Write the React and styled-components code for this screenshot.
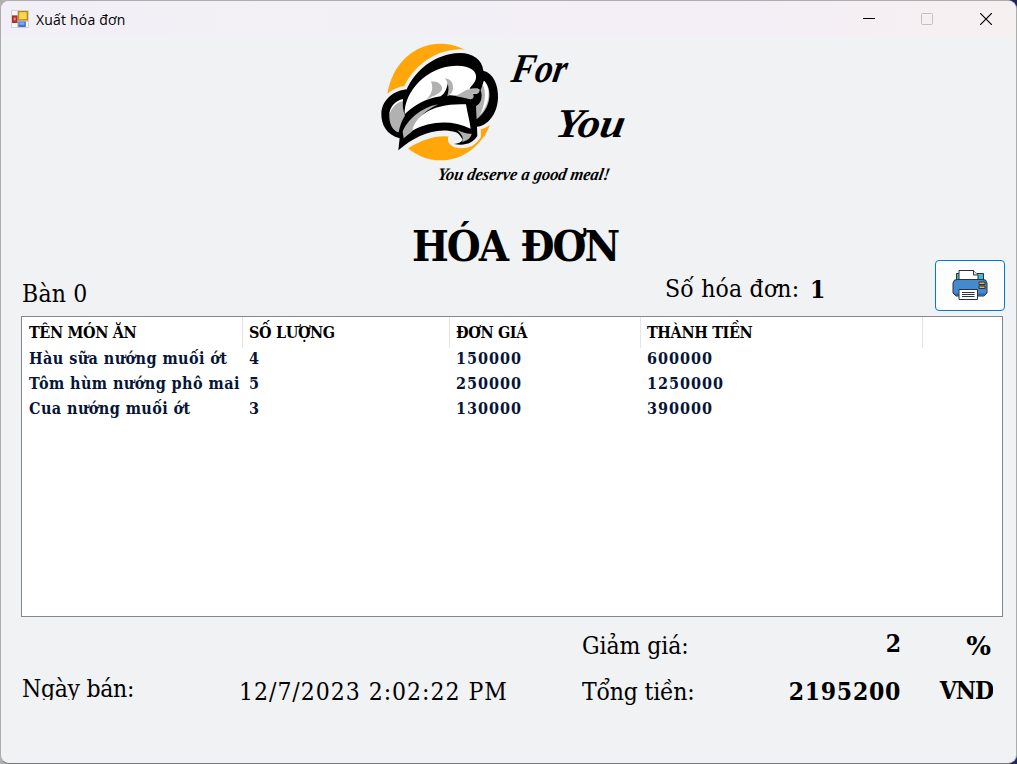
import React from 'react';
import styled, { createGlobalStyle } from 'styled-components';

const Global = createGlobalStyle`
  * { box-sizing: border-box; }
  body {
    margin: 0;
    background: linear-gradient(90deg, #b0b0b0 0 109px, #666 109px 617px, #8a8a8a 617px 677px, #1e2460 677px);
  }
`;

const Window = styled.div`
  width: 1017px;
  height: 764px;
  display: flex;
  flex-direction: column;
  overflow: hidden;
  background: #f0f2f4;
  border: 1px solid #acacac;
  border-bottom-color: #77787c;
  border-radius: 9px;
  color: #000;
  font-family: "DejaVu Serif Condensed", "DejaVu Serif", serif;
`;

const TitleBar = styled.header`
  flex: none;
  height: 36px;
  display: flex;
  align-items: center;
  padding-left: 10px;
  background: linear-gradient(90deg, #f2f0f6, #f4eff6 75%, #f7f0f1);
`;

const Caption = styled.span`
  flex: 1;
  margin-left: 7px;
  padding-top: 2px;
  font: 14px/20px "Open Sans", sans-serif;
  letter-spacing: 0.2px;
`;

const CaptionButtons = styled.div`
  display: flex;
  margin-right: 1px;
`;

const CaptionButton = styled.button`
  width: 58.5px;
  height: 36px;
  padding: 0;
  border: 0;
  background: none;
  display: grid;
  place-items: center;
  color: ${(p) => (p.disabled ? '#c3bfc2' : '#000')};
`;

const Brand = styled.div`
  flex: none;
  height: 185px;
  padding: 3px 0 0 375px;
`;

const Heading = styled.h1`
  flex: none;
  height: 38px;
  margin: 0;
  padding-left: 411px;
  font-size: 43.3px;
  line-height: 47px;
  font-weight: 700;
  letter-spacing: -2px;
  word-spacing: 2px;
  white-space: nowrap;
`;

const InfoRow = styled.div`
  flex: none;
  height: 56px;
  display: grid;
  grid-template-columns: 643px 145px 125px 70px;
  align-items: start;
  padding-left: 21px;
`;

const Label = styled.span`
  display: block;
  height: ${(p) => p.$height || 40}px;
  margin-top: ${(p) => p.$top || 0}px;
  overflow: hidden;
  font-size: 24.5px;
  line-height: 40px;
  letter-spacing: ${(p) => p.$spacing || 0}px;
  white-space: nowrap;
`;

const Value = styled(Label)`
  font-weight: 700;
  text-align: ${(p) => p.$align || 'left'};
`;

const Percent = styled(Value)`
  padding-right: 2px;
  font-family: "DejaVu Serif", serif;
  font-size: 26px;
`;

const PrintButton = styled.button`
  width: 70px;
  height: 51px;
  padding: 0 0 1px 0;
  display: grid;
  place-items: center;
  background: #fdfdfd;
  border: 1px solid #0078d4;
  border-radius: 4px;
`;

const ListView = styled.div`
  flex: none;
  width: 982px;
  height: 301px;
  margin-left: 20px;
  background: #fff;
  border: 1px solid #828790;
`;

const ListRow = styled.div`
  display: grid;
  grid-template-columns: 221px 207px 191px 282px 1fr;
  height: 25px;
  color: #061536;
  font-size: 16px;
  line-height: 25px;
  font-weight: 700;
`;

const ListHead = styled(ListRow)`
  height: 28px;
  margin-bottom: 1px;
  color: #000;
  font-size: 16px;
  line-height: 31px;
`;

const Cell = styled.span`
  padding-left: ${(p) => (p.$numeric ? 6 : 7)}px;
  white-space: nowrap;
  letter-spacing: ${(p) => (p.$numeric ? 1 : 0.43)}px;
`;

const HeadCell = styled(Cell)`
  border-right: 1px solid #e5e5e5;
  letter-spacing: -0.35px;
`;

const Summary = styled.footer`
  flex: 1;
  display: grid;
  grid-template-columns: 217px 343px 169px 150px 92px;
  grid-template-rows: 46px 46px;
  align-items: start;
  padding: 9px 0 0 21px;
`;

const columns = ['TÊN MÓN ĂN', 'SỐ LƯỢNG', 'ĐƠN GIÁ', 'THÀNH TIỀN'];
const dishes = [
  ['Hàu sữa nướng muối ớt', '4', '150000', '600000'],
  ['Tôm hùm nướng phô mai', '5', '250000', '1250000'],
  ['Cua nướng muối ớt', '3', '130000', '390000'],
];

const FormIcon = () => (
  <svg width="18" height="18" viewBox="0 0 18 18">
    <rect width="18" height="18" rx="1" fill="#cfd0d4" />
    <path d="M1 1h5v4H1zM1 13h5v4H1zM15 12h2v5h-2z" fill="#f8f8fb" />
    <rect x="1" y="5.5" width="5.5" height="7.5" fill="#b22d2a" />
    <rect x="2.7" y="7.5" width="2" height="3" fill="#e58b80" />
    <rect x="7" y="1" width="10" height="9.5" fill="#b58a14" />
    <rect x="8.2" y="2.2" width="7.5" height="7" fill="#ffd54a" />
    <rect x="7.3" y="11.5" width="7.5" height="5.5" fill="#3f74d8" />
    <rect x="8.3" y="12.3" width="5" height="2.5" fill="#7fa9f2" />
  </svg>
);

const BrandLogo = () => (
  <svg width="260" height="155" viewBox="376 40 260 155">
    <g transform="translate(370 35) scale(.3333)">
      <ellipse cx="212" cy="201" rx="161" ry="175" fill="#ffa60a" />
      <path
        d="M85 346L89 310C50 300 33 270 34 235C36 198 66 168 110 163C135 108 192 56 270 54C308 54 337 74 340 107C370 114 386 150 384 190C382 238 352 274 321 275L322 303C308 325 285 333 256 326C240 318 240 305 262 298C200 280 135 310 85 346Z"
        fill="#f0f2f4" stroke="#f0f2f4" strokeWidth="22" strokeLinejoin="round"
      />
      <path
        d="M85 346L89 310C50 300 33 270 34 235C36 198 66 168 110 163C135 108 192 56 270 54C308 54 337 74 340 107C370 114 386 150 384 190C382 238 352 274 321 275L322 303C308 325 285 333 252 327C264 325 274 322 278 314C272 306 270 298 258 292C200 274 135 302 85 346Z"
        fill="#000"
      />
      <path d="M99 194C70 200 56 222 58 248C60 275 74 290 86 292C90 270 97 254 105 242C98 225 98 208 99 194Z" fill="#b1b1b1" />
      <path d="M99 192C76 197 61 213 58 238C68 214 80 203 98 199Z" fill="#fff" />
      <path d="M104 238C102 170 170 94 258 92C300 91 322 108 318 130C315 146 302 154 299 161C310 162 322 158 328 163C331 174 318 180 308 176C312 186 310 190 302 193C280 183 252 182 233 181C240 170 238 155 234 142C231 160 226 175 212 184C166 191 132 211 104 238Z" fill="#fff" />
      <path d="M183 139C204 139 218 149 216 163C212 178 184 184 166 196C184 180 192 164 183 139ZM225 130C242 132 250 144 249 158C249 172 241 178 232 184C237 166 238 148 225 130ZM256 183C275 176 285 162 306 162C317 163 327 158 328 166C328 176 315 180 308 174C314 186 309 191 302 193Z" fill="#b1b1b1" />
      <path d="M342 137C368 160 366 222 316 255L309 214C330 211 337 190 332 166Z" fill="#b1b1b1" />
      <path d="M342 137C356 150 361 180 350 207C345 220 338 231 330 239C345 212 350 168 338 149Z" fill="#fff" />
      <path d="M98 290C112 256 152 217 205 208C155 232 142 255 127 289L101 310Z" fill="#b1b1b1" />
      <path d="M127 287C137 243 184 204 288 208C292 234 299 256 302 281C245 254 180 258 127 287Z" fill="#fff" />
      <path d="M262 286C278 292 294 298 305 296C302 310 290 318 276 320C282 308 276 299 262 286Z" fill="#b1b1b1" />
      <path d="M329 170C334 188 324 199 303 205L297 210L303 274L321 277L318 213C332 207 338 190 333 168Z" fill="#000" />
      <path d="M332 284L356 274L343 306Z" fill="#ffa60a" />
    </g>
    <g fontFamily="'Liberation Serif', serif" fontStyle="italic" fontWeight="700" fill="#000">
      <text transform="translate(510 81.5) skewX(-10)" fontSize="41" textLength="55" lengthAdjust="spacingAndGlyphs">For</text>
      <text transform="translate(554 137) skewX(-10)" fontSize="41" textLength="69" lengthAdjust="spacingAndGlyphs">You</text>
      <text transform="translate(437 180) skewX(-10)" fontSize="17.5" textLength="172" lengthAdjust="spacingAndGlyphs">You deserve a good meal!</text>
    </g>
  </svg>
);

const PrinterIcon = () => (
  <svg width="36" height="32" viewBox="0 0 36 32" stroke="#2b3140" strokeLinejoin="round">
    <rect x="4.5" y="4.5" width="27" height="8" fill="#3dbdcb" />
    <path d="M7 12V1.500H21.500L26 6V12Z" fill="#fff" />
    <path d="M21.500 1.500V6H26" fill="#dfe3e8" />
    <path d="M2.500 11L6 10.500H30L33.500 11L35 14V24L32 27H4L1 24V14Z" fill="#4589cf" />
    <path d="M2 24.500L4 26.500H32L34 24.500Z" fill="#2d69ad" stroke="none" />
    <rect x="27" y="13" width="6" height="2.500" fill="#f2ae35" />
    <rect x="27" y="17" width="6" height="2.500" fill="#f2ae35" />
    <path d="M7 20.500H25.500V30.500H7Z" fill="#fff" />
    <path d="M10 23.500h12.500M10 25.500h12.500M10 27.500h12.500" />
  </svg>
);

export default function App() {
  return (
    <>
      <Global />
      <Window>
        <TitleBar>
          <FormIcon />
          <Caption>Xuất hóa đơn</Caption>
          <CaptionButtons>
            <CaptionButton aria-label="Minimize">
              <svg width="12" height="12" stroke="currentColor"><path d="M0 5.500h12" /></svg>
            </CaptionButton>
            <CaptionButton aria-label="Maximize" disabled>
              <svg width="12" height="12" stroke="currentColor" fill="none"><rect x=".5" y=".5" width="11" height="11" rx="1" /></svg>
            </CaptionButton>
            <CaptionButton aria-label="Close">
              <svg width="12" height="12" stroke="currentColor" strokeWidth="1.2"><path d="M0 0L12 12M12 0L0 12" /></svg>
            </CaptionButton>
          </CaptionButtons>
        </TitleBar>

        <Brand><BrandLogo /></Brand>
        <Heading>HÓA ĐƠN</Heading>

        <InfoRow>
          <Label $top={14} $spacing={0.2}>Bàn 0</Label>
          <Label $top={9} $spacing={0.2}>Số hóa đơn:</Label>
          <Value $top={10}>1</Value>
          <PrintButton aria-label="In hóa đơn"><PrinterIcon /></PrintButton>
        </InfoRow>

        <ListView>
          <ListHead>
            {columns.map((name, i) => <HeadCell key={name} $numeric={i > 0}>{name}</HeadCell>)}
          </ListHead>
          {dishes.map((dish) => (
            <ListRow key={dish[0]}>
              {dish.map((text, i) => <Cell key={i} $numeric={i > 0}>{text}</Cell>)}
            </ListRow>
          ))}
        </ListView>

        <Summary>
          <span />
          <span />
          <Label $spacing={-0.1}>Giảm giá:</Label>
          <Value $align="right" $top={-2}>2</Value>
          <Percent $align="right">%</Percent>
          <Label $top={-3} $height={31} $spacing={-0.3}>Ngày bán:</Label>
          <Label $spacing={0.97}>12/7/2023 2:02:22 PM</Label>
          <Label $spacing={-0.2}>Tổng tiền:</Label>
          <Value $align="right" $spacing={0.7}>2195200</Value>
          <Value $align="right" $top={-1} $spacing={-1}>VND</Value>
        </Summary>
      </Window>
    </>
  );
}
